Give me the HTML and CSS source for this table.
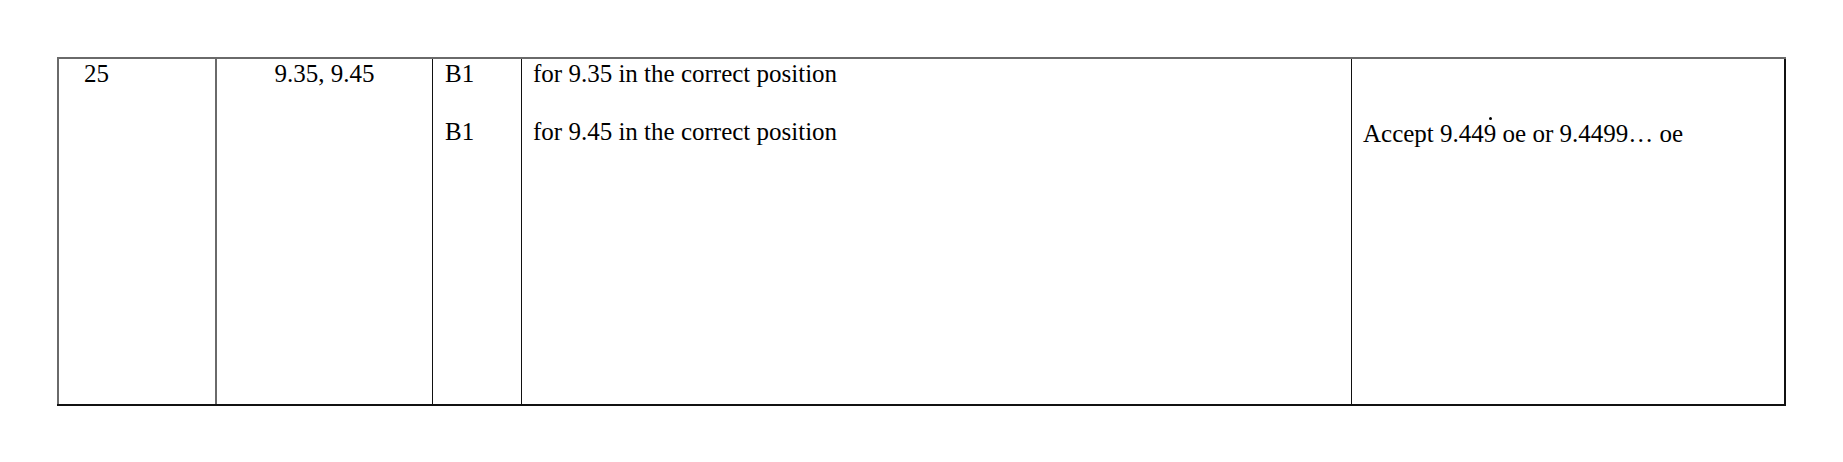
FILE: index.html
```html
<!DOCTYPE html>
<html>
<head>
<meta charset="utf-8">
<link rel="stylesheet" href="styles.css">
</head>
<body>
<div class="mark-table">
  <div class="cell c-q">25</div>
  <div class="cell c-ans">9.35, 9.45</div>
  <div class="cell c-mark">
    <p class="para">B1</p>
    <p class="para gap">B1</p>
  </div>
  <div class="cell c-desc">
    <p class="para">for 9.35 in the correct position</p>
    <p class="para gap">for 9.45 in the correct position</p>
  </div>
  <div class="cell c-note">
    <p class="para">Accept 9.44<span class="recur">9</span> oe or 9.4499… oe</p>
  </div>
</div>
</body>
</html>
```

FILE: styles.css
```css
* {
  box-sizing: border-box;
}

html, body {
  margin: 0;
  padding: 0;
  background: #ffffff;
}

body {
  font-family: "Liberation Serif", "Times New Roman", serif;
  font-size: 25px;
  line-height: 28.75px;
  color: #000000;
}

.mark-table {
  display: grid;
  grid-template-columns: 158px 217px 89px 830px 435px;
  width: 1729px;
  margin: 57px 0 0 57px;
  border-top: 2px solid #6a6a6a;
  border-bottom: 2px solid #111111;
}

.cell {
  min-height: 345px;
  padding-top: 1px;
  border-left: 1px solid #111111;
}

.para {
  margin: 0;
}

.para.gap {
  margin-top: 28.85px;
}

.recur {
  position: relative;
}

.recur::after {
  content: "";
  position: absolute;
  top: -3px;
  left: 50%;
  width: 3px;
  height: 3px;
  margin-left: -1px;
  border-radius: 50%;
  background: #000000;
}

.c-q {
  border-left: 2px solid #6a6a6a;
  padding-left: 25px;
}

.c-ans {
  border-left: 2px solid #6a6a6a;
  text-align: center;
}

.c-mark {
  padding-left: 12px;
}

.c-desc {
  padding-left: 11px;
}

.c-note {
  padding-left: 11px;
  padding-top: 61px;
  border-right: 2px solid #111111;
}
```
